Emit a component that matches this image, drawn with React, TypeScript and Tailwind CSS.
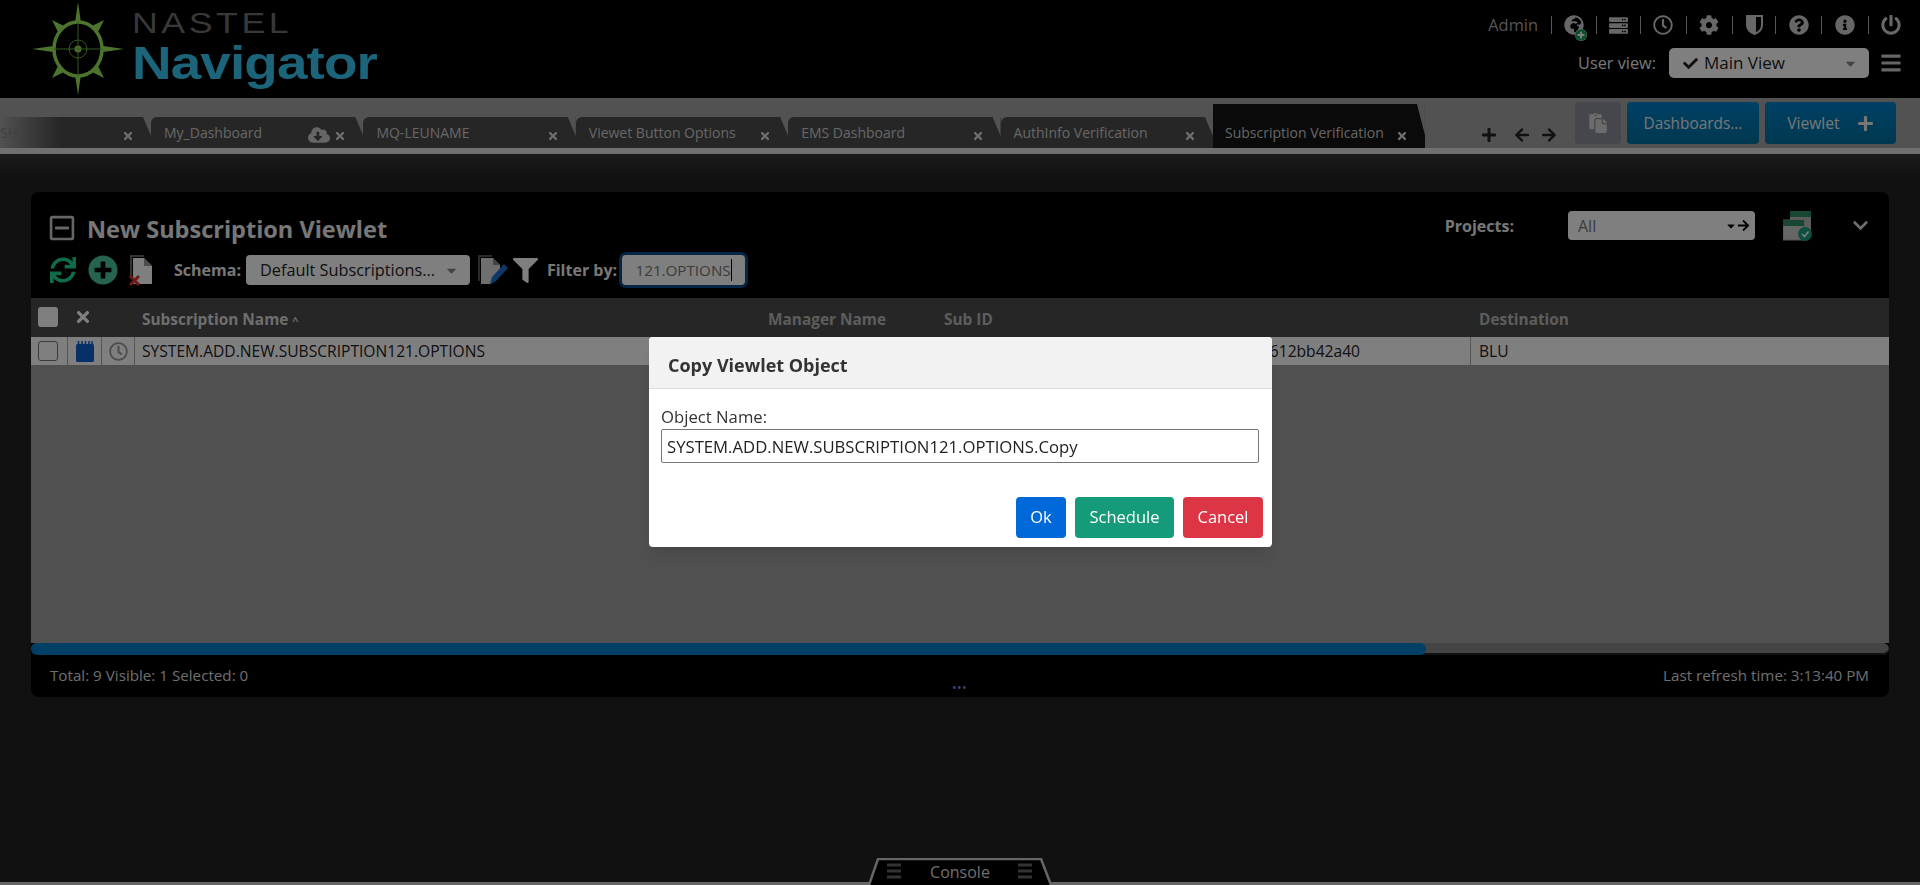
import {
  FaArrowLeft, FaArrowRight, FaBars, FaCaretDown, FaCheck, FaCloudDownloadAlt, FaCog, FaFilter,
  FaGlobeAfrica, FaInfoCircle, FaPlus, FaPowerOff, FaQuestionCircle, FaRegClock,
  FaRegMinusSquare, FaServer, FaSync, FaTimes, FaPaste, FaChevronDown, FaPlusCircle,
} from 'react-icons/fa';

const FONT = "font-['Open_Sans','Noto_Sans',sans-serif]";

const tabs = [
  { name: 'SH', first: true },
  { name: 'My_Dashboard', cloud: true },
  { name: 'MQ-LEUNAME' },
  { name: 'Viewet Button Options' },
  { name: 'EMS Dashboard' },
  { name: 'AuthInfo Verification' },
];

function Logo() {
  return (
    <div className="flex items-start">
      <svg width="92" height="96" viewBox="0 0 92 96" className="ml-[32px] mt-[2px] shrink-0">
        <g fill="#9ae85a">
          <polygon points="46,0 50,28 46,34 42,28" />
          <polygon points="46,93 50,65 46,59 42,65" />
          <polygon points="0,47 28,43 34,47 28,51" />
          <polygon points="92,47 64,43 58,47 64,51" />
          <polygon points="20,18 32,24 26,30" />
          <polygon points="72,18 60,24 66,30" />
          <polygon points="20,76 32,70 26,64" />
          <polygon points="72,76 60,70 66,64" />
        </g>
        <ellipse cx="46" cy="47" rx="24" ry="27" fill="#000" stroke="#9ae85a" strokeWidth="3.5" />
        <circle cx="46" cy="47" r="9" fill="none" stroke="#6fae45" strokeWidth="1" />
        <circle cx="46" cy="47" r="3.5" fill="#9ae85a" />
        <path d="M46 20V74M22 47H70" stroke="#6fae45" strokeWidth="1" />
      </svg>
      <div className="ml-[8px] origin-left scale-x-[1.19] font-['Liberation_Sans',sans-serif]">
        <div className="mt-[8px] h-[30px] text-[30px] leading-[30px] tracking-[3px] text-[#707070]">NASTEL</div>
        <div className="h-[50px] text-[46px] font-bold leading-[50px] tracking-[-0.7px] text-[#36c8f5]">Navigator</div>
      </div>
    </div>
  );
}

function HalfShield() {
  return (
    <svg width="17" height="20" viewBox="0 0 17 20">
      <path d="M1 1h15v9c0 4.500-3.500 7.500-7.500 9C4.500 17.500 1 14.500 1 10z" fill="none" stroke="currentColor" strokeWidth="2" />
      <path d="M1 1h9v17.500l-1.500.5C4.500 17.500 1 14.500 1 10z" fill="currentColor" />
    </svg>
  );
}

function TopIcons() {
  const sep = <span className="h-[18px] w-px bg-[#aaa]" />;
  return (
    <div className="flex h-[24px] items-center justify-end text-[#cfcfcf]">
      <span className="mr-[13px] text-[16.4px] text-[#aaa]">Admin</span>
      {sep}
      <span className="relative ml-[12px] mr-[12px] w-[20px]">
        <FaGlobeAfrica size={20} />
        <FaPlusCircle size={12} className="absolute -bottom-[6px] -right-[3px] rounded-full bg-white text-[#15a05a]" />
      </span>
      {sep}
      <span className="ml-[12px] mr-[11px] w-[20px]"><FaServer size={19} /></span>
      {sep}
      <span className="ml-[12px] mr-[13px] w-[20px]"><FaRegClock size={20} /></span>
      {sep}
      <span className="ml-[12px] mr-[13px] w-[20px]"><FaCog size={20} /></span>
      {sep}
      <span className="ml-[13px] mr-[12px] w-[17px]"><HalfShield /></span>
      {sep}
      <span className="ml-[13px] mr-[12px] w-[20px]"><FaQuestionCircle size={20} /></span>
      {sep}
      <span className="ml-[13px] mr-[13px] w-[20px]"><FaInfoCircle size={20} /></span>
      {sep}
      <span className="ml-[12px] mr-[19px] w-[20px]"><FaPowerOff size={20} /></span>
    </div>
  );
}

function Tab({ name, cloud, first }: { name: string; cloud?: boolean; first?: boolean }) {
  return (
    <div
      className={`relative flex h-[31px] shrink-0 items-center bg-[#4c4c4c] text-[14px] text-[#ccc] ${
        first ? 'w-[151px] pl-0' : 'w-[212.4px] rounded-tl-md pl-[13px]'
      }`}
    >
      {first && <span className="absolute inset-y-0 left-0 w-[62px] bg-gradient-to-r from-[#a4a4a4] to-[#4c4c4c]" />}
      <span className={first ? 'relative text-[#808080]' : ''}>{name}</span>
      {cloud && <FaCloudDownloadAlt size={22} className="absolute right-[33px] top-[7px] text-[#ccc]" />}
      <FaTimes size={12} className="absolute right-[17px] top-[13px] text-[#ddd]" />
      <span className="absolute right-0 top-0 h-[19px] w-[8px] bg-[#a4a4a4] [clip-path:polygon(0_0,100%_0,100%_100%)]" />
    </div>
  );
}

function TabBar() {
  return (
    <div className="relative flex h-[50px] shrink-0 items-end overflow-hidden bg-[#a4a4a4]">
      {tabs.map(t => (
        <Tab key={t.name} name={t.name} cloud={t.cloud} first={t.first} />
      ))}
      <div className="relative flex h-[44px] w-[212px] shrink-0 items-center bg-[#141414] pl-[12px] pt-[13px] text-[14px] text-[#ccc]">
        <span>Subscription Verification</span>
        <FaTimes size={12} className="absolute right-[17px] top-[26px] text-[#ddd]" />
        <span className="absolute right-0 top-0 h-[31px] w-[8px] bg-[#a4a4a4] [clip-path:polygon(0_0,100%_0,100%_100%)]" />
      </div>
      <div className="mb-[5px] ml-[56px] flex items-center text-[#222]">
        <FaPlus size={16} className="mr-[17px]" />
        <FaArrowLeft size={16} className="mr-[11px]" />
        <FaArrowRight size={16} />
      </div>
      <div className="mb-[4px] ml-[18px] flex h-[42px] items-center gap-[6px]">
        <button className="flex h-[42px] w-[46px] items-center justify-center rounded-[4px] bg-[#8a8e98] text-[#d8d8d8]">
          <FaPaste size={20} />
        </button>
        <button className="h-[42px] w-[132px] rounded-[4px] bg-gradient-to-b from-[#0082cc] to-[#00709f] pt-[1px] text-[15.4px] text-[#eee]">
          Dashboards...
        </button>
        <button className="flex h-[42px] w-[131px] items-center justify-center gap-[17px] rounded-[4px] bg-gradient-to-b from-[#0082cc] to-[#00709f] pt-[1px] text-[15.6px] text-[#eee]">
          Viewlet
          <FaPlus size={17} />
        </button>
      </div>
    </div>
  );
}

function NoteIcon() {
  return (
    <svg width="18" height="21" viewBox="0 0 18 21">
      <rect x="0" y="3" width="18" height="18" rx="1.5" fill="#0f5fd0" />
      <path d="M2.5 0v5M6 0v5M9.500 0v5M13 0v5M16 0v5" stroke="#0f5fd0" strokeWidth="1.6" />
    </svg>
  );
}

function DocX() {
  return (
    <svg width="26" height="32" viewBox="0 0 26 32">
      <path d="M2 1h14v2H4v20H2z" fill="#666" />
      <path d="M5 4h11l8 8v18H5z" fill="#fff" />
      <path d="M16 4v8h8" fill="#999" />
      <path d="M2 22l9 9M11 22l-9 9" stroke="#e03030" strokeWidth="3" />
    </svg>
  );
}

function DocEdit() {
  return (
    <svg width="33" height="32" viewBox="0 0 33 32">
      <path d="M1 1h14v2H3v24H1z" fill="#555" />
      <path d="M4 4h12l7 7v8L13 30H4z" fill="#ddd" />
      <path d="M16 4v7h7" fill="#888" />
      <path d="M13 31l2-8L27 10l4 4-12 13z" fill="#1f6fd0" />
    </svg>
  );
}

function ViewletToolbarIcon() {
  return (
    <svg width="30" height="30" viewBox="0 0 30 30">
      <rect x="7" y="0" width="21" height="22" fill="#bbb" />
      <rect x="7" y="0" width="21" height="6" fill="#2f8f60" />
      <rect x="0" y="9" width="21" height="20" fill="#ccc" stroke="#aaa" />
      <rect x="0" y="9" width="21" height="6" fill="#2f8f60" />
      <circle cx="22" cy="23" r="7" fill="#1aa080" />
      <path d="M19 23l2.500 2.500L25.500 20.500" stroke="#fff" strokeWidth="1.6" fill="none" />
    </svg>
  );
}

function Viewlet() {
  return (
    <section className="flex h-[505px] flex-col overflow-hidden rounded-lg bg-black">
      <div className="flex h-[106px] shrink-0 justify-between">
        <div className="pl-[19px]">
          <div className="mt-[24px] flex h-[26px] items-center text-[#eee]">
            <FaRegMinusSquare size={28} className="-ml-[2px] -mt-[2px] mr-[11px] text-[#ccc]" />
            <h1 className="text-[23.5px] font-bold leading-[26px]">New Subscription Viewlet</h1>
          </div>
          <div className="mt-[13px] flex h-[30px] items-center text-[16px] font-bold text-[#eee]">
            <FaSync size={26} className="text-[#1fd890]" />
            <FaPlusCircle size={30} className="ml-[12px] text-[#4cc8a0]" />
            <span className="ml-[10px]"><DocX /></span>
            <span className="ml-[20px]">Schema:</span>
            <div className="ml-[5px] flex h-[30px] w-[224px] items-center justify-between rounded-[4px] bg-white pl-[14px] pr-[11px] text-[16.3px] font-normal text-[#222]">
              Default Subscriptions...
              <FaCaretDown size={15} className="text-[#888]" />
            </div>
            <span className="ml-[7px]"><DocEdit /></span>
            <FaFilter size={25} className="ml-[3px] text-white" />
            <span className="ml-[9px]">Filter by:</span>
            <div className="ml-[5px] flex h-[30px] w-[123px] items-center justify-center rounded-[4px] bg-white text-[15.2px] font-normal text-[#777] shadow-[0_0_0_3px_#0a4a8c]">
              <span className="border-r border-black">121.OPTIONS</span>
            </div>
          </div>
        </div>
        <div className="flex h-[48px] items-center pr-[20px] pt-[19px] text-[#eee]">
          <span className="text-[16px] font-bold">Projects:</span>
          <div className="ml-[54px] flex h-[29px] w-[187px] items-center justify-between rounded-[4px] bg-white pl-[10px] pr-[5px] text-[16px] text-[#777]">
            All
            <span className="flex items-center text-black">
              <FaCaretDown size={12} />
              <FaArrowRight size={13} />
            </span>
          </div>
          <span className="ml-[28px]"><ViewletToolbarIcon /></span>
          <FaChevronDown size={17} className="ml-[39px] text-[#ddd]" />
        </div>
      </div>

      <div className="flex h-[39px] shrink-0 items-center bg-[#4c4c4c] pt-[4px] text-[15.4px] font-bold text-[#bbb]">
        <span className="-mt-[6px] ml-[7px] h-[20px] w-[20px] rounded-[3px] bg-white" />
        <FaTimes size={18} className="-mt-[6px] ml-[16px] text-white" />
        <span className="ml-[50px] w-[626px] text-[#ddd]">Subscription Name <span className="text-[11px]">^</span></span>
        <span className="w-[176px]">Manager Name</span>
        <span className="w-[535px]">Sub ID</span>
        <span>Destination</span>
      </div>
      <div className="flex h-[28px] shrink-0 items-center bg-white text-[15.6px] text-[#222]">
        <div className="flex h-full w-[37px] items-center border-r border-[#aaa] pl-[7px]">
          <span className="h-[20px] w-[20px] shrink-0 rounded-[3px] border border-[#777] bg-white" />
        </div>
        <div className="flex h-full w-[34px] items-center justify-center border-r border-[#aaa]"><NoteIcon /></div>
        <div className="flex h-full w-[33px] items-center justify-center border-r border-[#aaa] text-[#999]"><FaRegClock size={19} /></div>
        <span className="ml-[7px] w-[1058px] shrink-0 pt-[2px]">SYSTEM.ADD.NEW.SUBSCRIPTION121.OPTIONS</span>
        <span className="w-[270px] shrink-0 pr-[110px] pt-[2px] text-right">612bb42a40</span>
        <span className="flex h-full items-center border-l border-[#aaa] pl-[8px] pt-[2px]">BLU</span>
      </div>
      <div className="flex-1 bg-[#a0a0a0]" />
      <div className="relative h-[12px] shrink-0 overflow-hidden rounded-full bg-[#888] shadow-[inset_0_-2px_0_#222]">
        <div className="h-full w-[1395px] rounded-full bg-[#007fcc]" />
      </div>
      <div className="relative flex h-[42px] shrink-0 items-center justify-between pb-[1px] pl-[19px] pr-[20px] text-[15.2px] text-[#ddd]">
        <span>Total: 9 Visible: 1 Selected: 0</span>
        <span>Last refresh time: 3:13:40 PM</span>
        <span className="absolute bottom-[4px] left-[921px] text-[12px] leading-[10px] tracking-[0.5px] text-[#8a8ae0]">•••</span>
      </div>
    </section>
  );
}

function ConsoleTab() {
  return (
    <div className="flex h-[27px] shrink-0 justify-center border-b-[3px] border-[#ccc]">
      <div className="relative -mb-[3px] h-[27px] w-[184px] text-center">
        <svg width="184" height="27" viewBox="0 0 184 27" className="absolute inset-0">
          <path d="M1 27L10 1H173L183 27" fill="#000" stroke="#ccc" strokeWidth="2.500" />
          <path d="M19 7h14M19 13h14M19 19h14M150 7h14M150 13h14M150 19h14" stroke="#666" strokeWidth="3" />
        </svg>
        <span className="relative text-[16px] leading-[28px] text-[#ddd]">Console</span>
      </div>
    </div>
  );
}

function CopyDialog() {
  return (
    <div className="fixed inset-0 bg-black/50">
      <div className="absolute left-[649px] top-[337px] h-[210px] w-[623px] overflow-hidden rounded-[4px] bg-white text-[#333] shadow-lg">
        <div className="flex h-[52px] items-center border-b border-[#ddd] bg-[#f2f2f2] pl-[19px] pt-[6px] text-[18px] font-bold">
          Copy Viewlet Object
        </div>
        <div className="px-[12px] pt-[16px] text-[16.7px]">
          <label className="block h-[24px] leading-[24px]">Object Name:</label>
          <input
            readOnly
            value="SYSTEM.ADD.NEW.SUBSCRIPTION121.OPTIONS.Copy"
            className="block h-[34px] w-[598px] rounded-[2px] border border-[#767676] px-[5px] text-[16.7px] text-[#222] outline-none"
          />
        </div>
        <div className="mt-[34px] flex justify-end gap-[9px] pr-[9px] text-[16.5px] text-white">
          <button className="h-[41px] w-[50px] rounded-[4px] bg-[#0069d9]">Ok</button>
          <button className="h-[41px] w-[99px] rounded-[4px] bg-[#159a7a]">Schedule</button>
          <button className="h-[41px] w-[80px] rounded-[4px] bg-[#dc3545]">Cancel</button>
        </div>
      </div>
    </div>
  );
}

export default function App() {
  return (
    <div className={`relative flex h-screen flex-col overflow-hidden bg-[#222] ${FONT}`}>
      <header className="flex h-[98px] shrink-0 justify-between bg-black">
        <Logo />
        <div className="w-[500px] pt-[13px]">
          <TopIcons />
          <div className="mt-[11px] flex h-[30px] items-center justify-end">
            <span className="text-[16.3px] text-[#eee]">User view:</span>
            <div className="ml-[13px] flex h-[30px] w-[200px] items-center rounded-[5px] bg-white pl-[14px] text-[17px] text-[#222]">
              <FaCheck size={15} />
              <span className="ml-[6px]">Main View</span>
              <FaCaretDown size={15} className="ml-auto mr-[11px] text-[#888]" />
            </div>
            <FaBars size={22} className="ml-[11px] mr-[18px] text-[#ccc]" />
          </div>
        </div>
      </header>
      <TabBar />
      <div className="h-[6px] shrink-0 bg-[#e0e0e0]" />
      <main className="flex-1 bg-[linear-gradient(#363636,#222_24px)] px-[31px] pt-[38px]">
        <Viewlet />
      </main>
      <ConsoleTab />
      <CopyDialog />
    </div>
  );
}
